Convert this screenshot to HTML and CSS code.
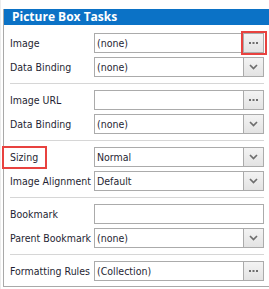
FILE: index.html
```html
<!DOCTYPE html>
<html>
<head>
<meta charset="utf-8">
<link rel="stylesheet" href="styles.css">
</head>
<body>
<div class="canvas">
  <div class="panel">
    <div class="hdr">Picture Box Tasks</div>
    <div class="body">
      <div class="group">
        <div class="row"><span class="lbl">Image</span><div class="field"><span class="val">(none)</span><span class="btn hl"><svg width="9" height="2" viewBox="0 0 9 2"><rect x="0" y="0" width="2" height="2" fill="#6e6e6e"/><rect x="3.5" y="0" width="2" height="2" fill="#6e6e6e"/><rect x="7" y="0" width="2" height="2" fill="#6e6e6e"/></svg></span></div></div>
        <div class="row"><span class="lbl">Data Binding</span><div class="field"><span class="val">(none)</span><span class="btn"><svg width="9" height="6" viewBox="0 0 9 6"><polyline points="1,1 4.5,4.5 8,1" fill="none" stroke="#6e6e6e" stroke-width="1.7"/></svg></span></div></div>
      </div>
      <div class="sep"></div>
      <div class="group">
        <div class="row"><span class="lbl">Image URL</span><div class="field"><span class="val"></span><span class="btn"><svg width="9" height="2" viewBox="0 0 9 2"><rect x="0" y="0" width="2" height="2" fill="#6e6e6e"/><rect x="3.5" y="0" width="2" height="2" fill="#6e6e6e"/><rect x="7" y="0" width="2" height="2" fill="#6e6e6e"/></svg></span></div></div>
        <div class="row"><span class="lbl">Data Binding</span><div class="field"><span class="val">(none)</span><span class="btn"><svg width="9" height="6" viewBox="0 0 9 6"><polyline points="1,1 4.5,4.5 8,1" fill="none" stroke="#6e6e6e" stroke-width="1.7"/></svg></span></div></div>
      </div>
      <div class="sep"></div>
      <div class="group">
        <div class="row"><span class="lbl"><span class="mark">Sizing</span></span><div class="field"><span class="val">Normal</span><span class="btn"><svg width="9" height="6" viewBox="0 0 9 6"><polyline points="1,1 4.5,4.5 8,1" fill="none" stroke="#6e6e6e" stroke-width="1.7"/></svg></span></div></div>
        <div class="row"><span class="lbl">Image Alignment</span><div class="field"><span class="val">Default</span><span class="btn"><svg width="9" height="6" viewBox="0 0 9 6"><polyline points="1,1 4.5,4.5 8,1" fill="none" stroke="#6e6e6e" stroke-width="1.7"/></svg></span></div></div>
      </div>
      <div class="sep"></div>
      <div class="group">
        <div class="row"><span class="lbl">Bookmark</span><div class="field"><span class="val"></span></div></div>
        <div class="row"><span class="lbl">Parent Bookmark</span><div class="field"><span class="val">(none)</span><span class="btn"><svg width="9" height="6" viewBox="0 0 9 6"><polyline points="1,1 4.5,4.5 8,1" fill="none" stroke="#6e6e6e" stroke-width="1.7"/></svg></span></div></div>
      </div>
      <div class="sep"></div>
      <div class="group">
        <div class="row"><span class="lbl">Formatting Rules</span><div class="field"><span class="val">(Collection)</span><span class="btn"><svg width="9" height="2" viewBox="0 0 9 2"><rect x="0" y="0" width="2" height="2" fill="#6e6e6e"/><rect x="3.5" y="0" width="2" height="2" fill="#6e6e6e"/><rect x="7" y="0" width="2" height="2" fill="#6e6e6e"/></svg></span></div></div>
      </div>
    </div>
  </div>
</div>
</body>
</html>
```

FILE: styles.css
```css
html, body {
  margin: 0;
  padding: 0;
  background: #ffffff;
}
.canvas {
  width: 269px;
  height: 289px;
  overflow: hidden;
  padding-top: 9px;
  box-sizing: border-box;
  background: linear-gradient(to right, #ececec 0, #ececec 1px, #ffffff 1px);
}
.panel {
  margin-left: 3px;
  border-left: 1px solid #a9a9a9;
  border-bottom: 1px solid #a9a9a9;
  background: #ffffff;
  width: 270px;
}
.hdr {
  height: 16px;
  background: #0b72c6;
  color: #ffffff;
  font-family: "Open Sans", "Noto Sans", sans-serif;
  font-weight: bold;
  font-size: 12px;
  line-height: 16px;
  padding-left: 8px;
}
.body {
  padding: 8px 0 5px 5px;
  width: 261px;
}
.group {
  display: flex;
  flex-direction: column;
  gap: 4px;
}
.row {
  display: grid;
  grid-template-columns: 85px 170px;
  align-items: center;
  height: 20px;
}
.lbl {
  font-family: "DejaVu Sans Condensed", "DejaVu Sans", sans-serif;
  font-stretch: condensed;
  font-size: 10.5px;
  color: #1f1f33;
  padding-left: 1px;
  white-space: nowrap;
}
.mark {
  display: inline-block;
  outline: 2px solid #e8423f;
  outline-offset: 0;
  padding: 3px 7px 3px 6px;
  margin-left: -6px;
  line-height: 13px;
}
.field {
  height: 20px;
  box-sizing: border-box;
  border: 1px solid #ababab;
  display: flex;
  align-items: stretch;
  background: #ffffff;
}
.val {
  flex: 1;
  font-family: "DejaVu Sans Condensed", "DejaVu Sans", sans-serif;
  font-stretch: condensed;
  font-size: 10.5px;
  color: #1f1f33;
  line-height: 18px;
  padding-left: 2px;
  white-space: nowrap;
  overflow: hidden;
}
.btn {
  position: relative;
  width: 19px;
  border-left: 1px solid #ababab;
  background: linear-gradient(#f3f3f3, #e3e3e3);
  display: flex;
  align-items: center;
  justify-content: center;
}
.hl::after {
  content: "";
  position: absolute;
  left: -3px;
  top: -3px;
  right: -4px;
  bottom: -3px;
  border: 2px solid #e8423f;
}
.sep {
  height: 1px;
  background: #d6d6d6;
  margin: 6px 0 6px 1px;
  width: 254px;
}
```
